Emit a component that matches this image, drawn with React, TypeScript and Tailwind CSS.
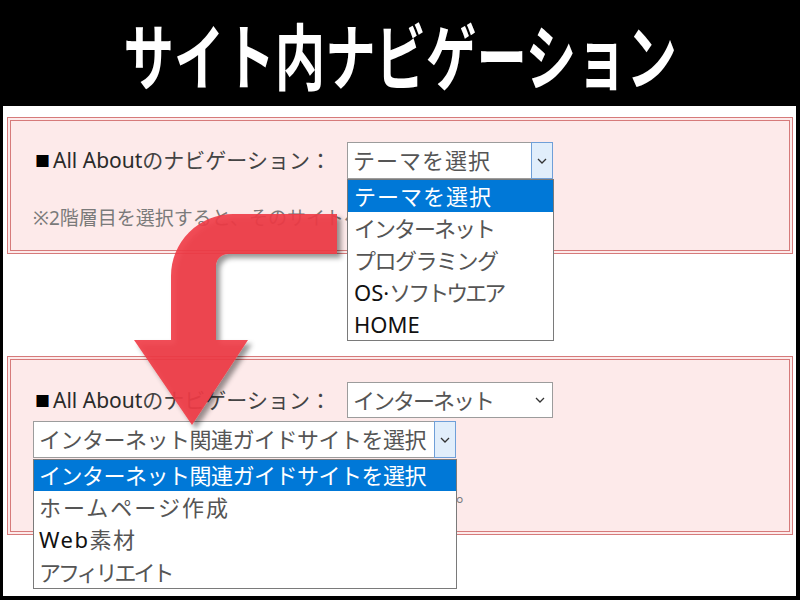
import React from 'react'

const Chevron = () => (
  <svg width="10" height="6" viewBox="0 0 10 6" className="block">
    <path d="M1 1l4 4 4-4" stroke="#333" strokeWidth="1.3" fill="none" />
  </svg>
)

const Label = () => (
  <span className="w-[314px] shrink-0 flex items-center text-[21px] leading-none whitespace-nowrap">
    <span className="text-[15px] text-black font-['Noto_Sans_CJK_JP',sans-serif] mr-[3px] ml-[2px]">■</span>
    <span className="text-[#2a2a2a]">All About</span>
    <span className="text-[#444]">のナビゲーション：</span>
  </span>
)

const Note = () => (
  <p className="text-[19px] leading-[28px] text-[#7a7a7a] whitespace-nowrap">
    ※2階層目を選択すると、そのサイトへ移動します。
  </p>
)

// double red frame
const Frame = ({ className, children }: { className: string; children: React.ReactNode }) => (
  <div className={`border border-[#d67a7a] bg-[#fdeaea] p-[2px] ${className}`}>
    <div className="h-full border border-[#d67a7a] pl-[22px]">{children}</div>
  </div>
)

export default function App() {
  return (
    <div className="relative w-[800px] h-[600px] overflow-hidden bg-black font-['Noto_Sans','Noto_Sans_CJK_JP',sans-serif]">
      <div className="h-[106px] flex items-center justify-center">
        <h1 className="text-white text-[72px] leading-none font-bold scale-x-[0.7] whitespace-nowrap font-['Noto_Sans_CJK_JP',sans-serif]">
          サイト内ナビゲーション
        </h1>
      </div>

      <div className="ml-[3px] w-[793px] h-[490px] bg-white pt-[11px] pl-[4px]">
        <Frame className="w-[786px] h-[137px]">
          <div className="pt-[21px] flex items-center h-[58px]">
            <Label />
            <div className="relative z-10">
              <div className="flex w-[206px] h-[37px] bg-white">
                <div className="flex-1 border-y border-l border-[#9c9c9c] pl-[5px] flex items-center text-[22px] tracking-[1px] text-[#555]">
                  テーマを選択
                </div>
                <div className="w-[22px] border border-[#6f9fd8] bg-[#e1eefb] flex items-center justify-center">
                  <Chevron />
                </div>
              </div>
              <ul className="absolute left-0 top-full w-[207px] border border-[#7a7a7a] bg-white text-[22px]">
                <li className="h-[32px] pl-[6px] flex items-center bg-[#0078d7] text-white tracking-[1px]">テーマを選択</li>
                <li className="h-[32px] pl-[6px] flex items-center text-[#555] tracking-[-2px]">インターネット</li>
                <li className="h-[32px] pl-[6px] flex items-center text-[#555] tracking-[-1.5px]">プログラミング</li>
                <li className="h-[32px] pl-[6px] flex items-center">
                  <span className="text-[#111]">OS·</span>
                  <span className="text-[#555] tracking-[-3px]">ソフトウエア</span>
                </li>
                <li className="h-[32px] pl-[6px] flex items-center text-[#111]">HOME</li>
              </ul>
            </div>
          </div>
          <div className="mt-[25px]">
            <Note />
          </div>
        </Frame>

        <Frame className="mt-[102px] w-[786px] h-[179px]">
          <div className="pt-[22px] flex items-center h-[58px]">
            <Label />
            <div className="flex w-[206px] h-[36px] bg-white border border-[#9c9c9c]">
              <div className="flex-1 pl-[5px] flex items-center text-[22px] tracking-[-2px] text-[#555]">
                インターネット
              </div>
              <div className="w-[24px] flex items-center justify-center">
                <Chevron />
              </div>
            </div>
          </div>
          <div className="relative z-10 mt-[3px] w-[423px]">
            <div className="flex h-[37px] bg-white">
              <div className="flex-1 border-y border-l border-[#9c9c9c] pl-[5px] flex items-center text-[22px] tracking-[-0.5px] text-[#555] whitespace-nowrap">
                インターネット関連ガイドサイトを選択
              </div>
              <div className="w-[22px] border border-[#6f9fd8] bg-[#e1eefb] flex items-center justify-center">
                <Chevron />
              </div>
            </div>
            <ul className="absolute left-0 top-full mt-[1px] w-[424px] border border-[#7a7a7a] bg-white text-[22px]">
              <li className="h-[31px] pl-[5px] flex items-center bg-[#0078d7] text-white tracking-[-0.5px] whitespace-nowrap">
                インターネット関連ガイドサイトを選択
              </li>
              <li className="h-[32px] pl-[5px] flex items-center text-[#555] tracking-[2px]">ホームページ作成</li>
              <li className="h-[33px] pl-[5px] flex items-center tracking-[1.5px]">
                <span className="text-[#111]">Web</span>
                <span className="text-[#555]">素材</span>
              </li>
              <li className="h-[32px] pl-[5px] flex items-center text-[#555] tracking-[-3px]">アフィリエイト</li>
            </ul>
          </div>
          <div className="mt-[23px]">
            <Note />
          </div>
        </Frame>
      </div>

      {/* bent arrow laid over the two panels */}
      <svg className="absolute inset-0 z-20 pointer-events-none" width="800" height="600" viewBox="0 0 800 600">
        <defs>
          <filter id="sh" x="-20%" y="-20%" width="140%" height="140%">
            <feDropShadow dx="4" dy="4" stdDeviation="2.5" floodColor="#000" floodOpacity="0.45" />
          </filter>
        </defs>
        <path
          d="M337 214 L233 214 A62 62 0 0 0 171 276 L171 340 L134 340 L192 425 L248 340 L216 340 L216 266 A12 12 0 0 1 228 254 L337 254 Z"
          fill="#f03c46"
          fillOpacity="0.9"
          filter="url(#sh)"
        />
      </svg>
    </div>
  )
}
